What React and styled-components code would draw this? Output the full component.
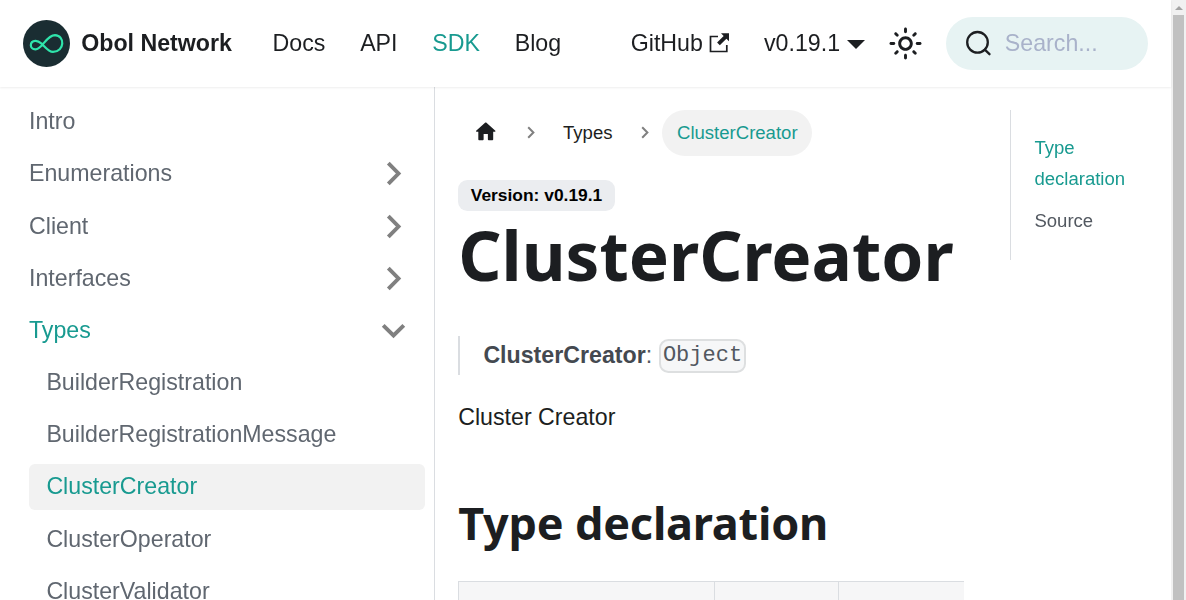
import React from "react";
import styled, { createGlobalStyle } from "styled-components";

const GlobalStyle = createGlobalStyle`
  html { font-size: 23.2px; }
  *, *::before, *::after { box-sizing: border-box; }
  body {
    margin: 0;
    overflow: hidden;
    background: #fff;
    color: #1c1e21;
    font-family: "Liberation Sans", Arial, sans-serif;
    line-height: 1.65;
  }
  a { color: inherit; text-decoration: none; }
  ul { list-style: none; margin: 0; padding: 0; }
  svg { display: block; flex: none; }
`;

const Window = styled.div`
  display: grid;
  grid-template-columns: minmax(0, 1fr) 15px;
  height: 600px;
  overflow: hidden;
`;

const Page = styled.div`
  display: flex;
  flex-direction: column;
  min-width: 0;
  height: 600px;
`;

const Navbar = styled.nav`
  flex: none;
  display: flex;
  justify-content: space-between;
  align-items: center;
  height: 3.75rem;
  padding: 0 1rem;
  background: #fff;
  box-shadow: 0 1px 2px 0 rgba(0, 0, 0, 0.07);
  z-index: 2;
  will-change: transform;
`;

const NavGroup = styled.div`
  display: flex;
  align-items: center;
`;

const Brand = styled.a`
  display: flex;
  align-items: center;
  gap: 11px;
  margin-right: 1rem;
  font-weight: 700;
`;

const NavLink = styled.a`
  display: flex;
  align-items: center;
  padding: 0 0.75rem;
  color: ${(p) => (p.$active ? "#189a90" : "#1c1e21")};
  svg { margin-left: ${(p) => p.$iconGap || "0"}; }
`;

const Caret = styled.span`
  margin: 2px 0 0 7px;
  border: solid transparent;
  border-width: 9.28px 9.28px 0;
  border-top-color: currentColor;
`;

const ThemeToggle = styled.button`
  display: flex;
  align-items: center;
  justify-content: center;
  width: 2rem;
  height: 2rem;
  padding: 0;
  border: 0;
  background: none;
  color: #1c1e21;
`;

const Search = styled.div`
  display: flex;
  align-items: center;
  gap: 13px;
  width: 202px;
  height: 53px;
  margin-left: 17px;
  padding: 0 19px;
  border-radius: 27px;
  background: #e7f3f3;
  color: #a9b2ca;
`;

const Body = styled.div`
  flex: 1;
  min-height: 0;
  display: flex;
`;

const Sidebar = styled.aside`
  flex: none;
  width: 18.75rem;
  padding: 0.5rem 9px 0 0.5rem;
  border-right: 1px solid #dadde1;
  overflow: hidden;
  will-change: transform;
`;

const MenuList = styled.ul`
  padding-left: ${(p) => (p.$nested ? "0.75rem" : "0")};
  margin-top: ${(p) => (p.$nested ? "0.25rem" : "0")};
`;

const MenuItem = styled.li`
  & + & { margin-top: 0.25rem; }
`;

const MenuLink = styled.a`
  display: flex;
  align-items: center;
  justify-content: space-between;
  height: 2rem;
  padding: 0 0.75rem ${(p) => (p.$current ? "1px" : "0")};
  border-radius: 0.25rem;
  line-height: 1.25;
  color: ${(p) => (p.$active ? "#189a90" : "#606770")};
  background: ${(p) => (p.$current ? "#f2f2f2" : "transparent")};
`;

const Main = styled.main`
  flex: 1;
  min-width: 0;
  display: grid;
  grid-template-columns: 75% 25%;
  padding-top: 1rem;
`;

const Article = styled.article`
  min-width: 0;
  padding: 0 1rem;
`;

const Crumbs = styled.ul`
  display: flex;
  align-items: center;
  height: 45.5px;
  margin-bottom: 24.5px;
  font-size: 0.8rem;
`;

const Crumb = styled.li`
  display: flex;
  align-items: center;
`;

const CrumbLink = styled.a`
  display: flex;
  align-items: center;
  height: 45.5px;
  padding: 0 14.85px;
  border-radius: 23px;
  color: ${(p) => (p.$active ? "#189a90" : "inherit")};
  background: ${(p) => (p.$active ? "#f2f2f2" : "transparent")};
  svg { margin-top: -2px; }
`;

const CrumbSeparator = styled.span`
  display: flex;
  justify-content: center;
  width: 34.8px;
`;

const Badge = styled.span`
  display: block;
  width: max-content;
  height: 31px;
  padding: 0 12.6px;
  border-radius: 9.3px;
  background: #ebedf0;
  color: #000;
  font-size: 0.75rem;
  font-weight: 700;
  line-height: 31px;
`;

const Title = styled.h1`
  margin: 0 0 37px;
  height: 88px;
  font: 700 67.5px/88px "Noto Sans", sans-serif;
  white-space: nowrap;
`;

const Quote = styled.blockquote`
  display: flex;
  align-items: center;
  height: 38.5px;
  margin: 0 0 23px;
  padding-left: 1rem;
  border-left: 2px solid #dadde1;
  color: #525860;
  strong { color: #444950; }
`;

const Code = styled.code`
  margin: 1px 0 0 6.7px;
  padding: 0 2px;
  height: 34px;
  border: 2px solid #dddfe0;
  border-radius: 9.3px;
  background: #f6f7f8;
  font: 22.04px/30px "Liberation Mono", monospace;
`;

const Paragraph = styled.p`
  margin: 0 0 57.5px;
`;

const Subtitle = styled.h2`
  margin: 0 0 27.5px;
  height: 60px;
  font: 700 45px/60px "Noto Sans", sans-serif;
  letter-spacing: -0.2px;
  white-space: nowrap;
`;

const TableHead = styled.div`
  display: grid;
  grid-template-columns: 256px 124px 1fr;
  height: 60px;
  border-top: 1px solid #dadde1;
  background: #f6f6f7;
`;

const HeadCell = styled.div`
  border-left: 1px solid #dadde1;
`;

const TocColumn = styled.div`
  padding: 0 1rem;
  will-change: transform;
`;

const Toc = styled.ul`
  padding: 1rem 0 1rem 1rem;
  border-left: 1px solid #dadde1;
  font-size: 0.8rem;
`;

const TocItem = styled.li`
  color: ${(p) => (p.$active ? "#189a90" : "#525860")};
  & + & { margin-top: 0.5rem; }
`;

const Scrollbar = styled.div`
  display: flex;
  flex-direction: column;
  align-items: center;
  gap: 5px;
  padding-top: 6px;
  background: #f1f1f1;
`;

const ScrollArrow = styled.span`
  border: solid transparent;
  border-width: 0 4px 4px;
  border-bottom-color: #a3a3a3;
`;

const ScrollThumb = styled.div`
  flex: 1;
  width: 11px;
  background: #c1c1c1;
`;

const Logo = () => (
  <svg width="47" height="47" viewBox="0 0 47 47">
    <circle cx="23.5" cy="23.5" r="23.5" fill="#1a2d32" />
    <path
      d="M18.6 23.6 C16 21.400 14.500 20.700 12.400 20.800 C6.300 21.200 6.300 29.300 12.400 29.400 C19.500 29.300 23 15.300 32 15.100 C42.200 15.500 41.800 31.700 30 31.900 C25.500 31.800 22 26.800 18.600 23.600Z"
      fill="none"
      stroke="#2fe4ab"
      strokeWidth="2.2"
    />
  </svg>
);

const ExternalIcon = () => (
  <svg width="20" height="21" viewBox="0 0 20 21">
    <path d="M9 3.5H1.500v15h16.300v-6.500" fill="none" stroke="currentColor" strokeWidth="1.7" />
    <path d="M12 .3h8v8l-2.600-2.600-6.600 6.500-2.700-2.700 6.600-6.500z" fill="currentColor" />
  </svg>
);

const SunIcon = () => (
  <svg width="35" height="35" viewBox="0 0 24 24" fill="currentColor">
    <path d="M12,9c1.650,0,3,1.350,3,3s-1.350,3-3,3s-3-1.350-3-3S10.350,9,12,9 M12,7c-2.760,0-5,2.240-5,5s2.240,5,5,5s5-2.240,5-5 S14.760,7,12,7L12,7z M2,13l2,0c0.550,0,1-0.450,1-1s-0.450-1-1-1l-2,0c-0.550,0-1,0.450-1,1S1.450,13,2,13z M20,13l2,0c0.550,0,1-0.450,1-1 s-0.450-1-1-1l-2,0c-0.550,0-1,0.450-1,1S19.450,13,20,13z M11,2v2c0,0.550,0.450,1,1,1s1-0.450,1-1V2c0-0.550-0.450-1-1-1S11,1.450,11,2z M11,20v2c0,0.550,0.450,1,1,1s1-0.450,1-1v-2c0-0.550-0.450-1-1-1C11.450,19,11,19.450,11,20z M5.990,4.580c-0.390-0.390-1.030-0.390-1.410,0 c-0.390,0.390-0.390,1.030,0,1.410l1.060,1.060c0.390,0.390,1.030,0.390,1.410,0s0.390-1.030,0-1.410L5.990,4.580z M18.360,16.950 c-0.390-0.390-1.030-0.390-1.410,0c-0.390,0.390-0.390,1.030,0,1.410l1.060,1.060c0.390,0.390,1.030,0.390,1.410,0c0.390-0.390,0.390-1.030,0-1.410 L18.360,16.950z M19.420,5.990c0.390-0.390,0.390-1.030,0-1.410c-0.390-0.390-1.030-0.390-1.410,0l-1.060,1.060c-0.390,0.390-0.390,1.030,0,1.410 s1.030,0.390,1.410,0L19.420,5.990z M7.050,18.360c0.390-0.390,0.390-1.030,0-1.410c-0.390-0.390-1.030-0.390-1.410,0l-1.060,1.060 c-0.390,0.390-0.390,1.030,0,1.410s1.030,0.390,1.410,0L7.050,18.360z" />
  </svg>
);

const SearchIcon = () => (
  <svg width="27" height="27" viewBox="0 0 27 27" fill="none" stroke="#1c1e21" strokeWidth="2.3" strokeLinecap="round">
    <circle cx="12.5" cy="12.3" r="10.3" />
    <path d="M19.8 19.7l4.700 4.500" />
  </svg>
);

const MenuChevron = ({ open }) => (
  <svg width="29" height="29" viewBox="0 0 29 29">
    <path
      d={open ? "M4.2 9.3l10.300 10.200L24.800 9.300" : "M9.300 4.200l10.200 10.300L9.300 24.800"}
      fill="none"
      stroke="#808080"
      strokeWidth="3.9"
    />
  </svg>
);

const CrumbChevron = () => (
  <svg width="8" height="13" viewBox="0 0 8 13">
    <path d="M1.2 1.200l5.200 5.300-5.200 5.300" fill="none" stroke="#808080" strokeWidth="2" />
  </svg>
);

const HomeIcon = () => (
  <svg width="25.5" height="25.5" viewBox="0 0 24 24">
    <path d="M10 19v-5h4v5c0 .550.450 1 1 1h3c.550 0 1-.450 1-1v-7h1.700c.460 0 .680-.570.330-.870L12.670 3.600c-.380-.340-.960-.340-1.340 0l-8.360 7.530c-.340.300-.130.870.330.870H5v7c0 .550.450 1 1 1h3c.550 0 1-.450 1-1z" fill="currentColor" />
  </svg>
);

const categories = ["Enumerations", "Client", "Interfaces"];
const types = [
  "BuilderRegistration",
  "BuilderRegistrationMessage",
  "ClusterCreator",
  "ClusterOperator",
  "ClusterValidator",
];

export default function App() {
  return (
    <Window>
      <GlobalStyle />
      <Page>
        <Navbar>
          <NavGroup>
            <Brand><Logo />Obol Network</Brand>
            <NavLink>Docs</NavLink>
            <NavLink>API</NavLink>
            <NavLink $active>SDK</NavLink>
            <NavLink>Blog</NavLink>
          </NavGroup>
          <NavGroup>
            <NavLink $iconGap="6.3px">GitHub<ExternalIcon /></NavLink>
            <NavLink>v0.19.1<Caret /></NavLink>
            <ThemeToggle aria-label="Switch theme"><SunIcon /></ThemeToggle>
            <Search><SearchIcon />Search...</Search>
          </NavGroup>
        </Navbar>
        <Body>
          <Sidebar>
            <MenuList>
              <MenuItem><MenuLink>Intro</MenuLink></MenuItem>
              {categories.map((name) => (
                <MenuItem key={name}><MenuLink>{name}<MenuChevron /></MenuLink></MenuItem>
              ))}
              <MenuItem>
                <MenuLink $active>Types<MenuChevron open /></MenuLink>
                <MenuList $nested>
                  {types.map((name) => (
                    <MenuItem key={name}>
                      <MenuLink $active={name === "ClusterCreator"} $current={name === "ClusterCreator"}>
                        {name}
                      </MenuLink>
                    </MenuItem>
                  ))}
                </MenuList>
              </MenuItem>
            </MenuList>
          </Sidebar>
          <Main>
            <Article>
              <Crumbs>
                <Crumb><CrumbLink><HomeIcon /></CrumbLink><CrumbSeparator><CrumbChevron /></CrumbSeparator></Crumb>
                <Crumb><CrumbLink>Types</CrumbLink><CrumbSeparator><CrumbChevron /></CrumbSeparator></Crumb>
                <Crumb><CrumbLink $active>ClusterCreator</CrumbLink></Crumb>
              </Crumbs>
              <Badge>Version: v0.19.1</Badge>
              <Title>ClusterCreator</Title>
              <Quote><strong>ClusterCreator</strong>:<Code>Object</Code></Quote>
              <Paragraph>Cluster Creator</Paragraph>
              <Subtitle>Type declaration</Subtitle>
              <TableHead><HeadCell /><HeadCell /><HeadCell /></TableHead>
            </Article>
            <TocColumn>
              <Toc>
                <TocItem $active>Type declaration</TocItem>
                <TocItem>Source</TocItem>
              </Toc>
            </TocColumn>
          </Main>
        </Body>
      </Page>
      <Scrollbar><ScrollArrow /><ScrollThumb /></Scrollbar>
    </Window>
  );
}
